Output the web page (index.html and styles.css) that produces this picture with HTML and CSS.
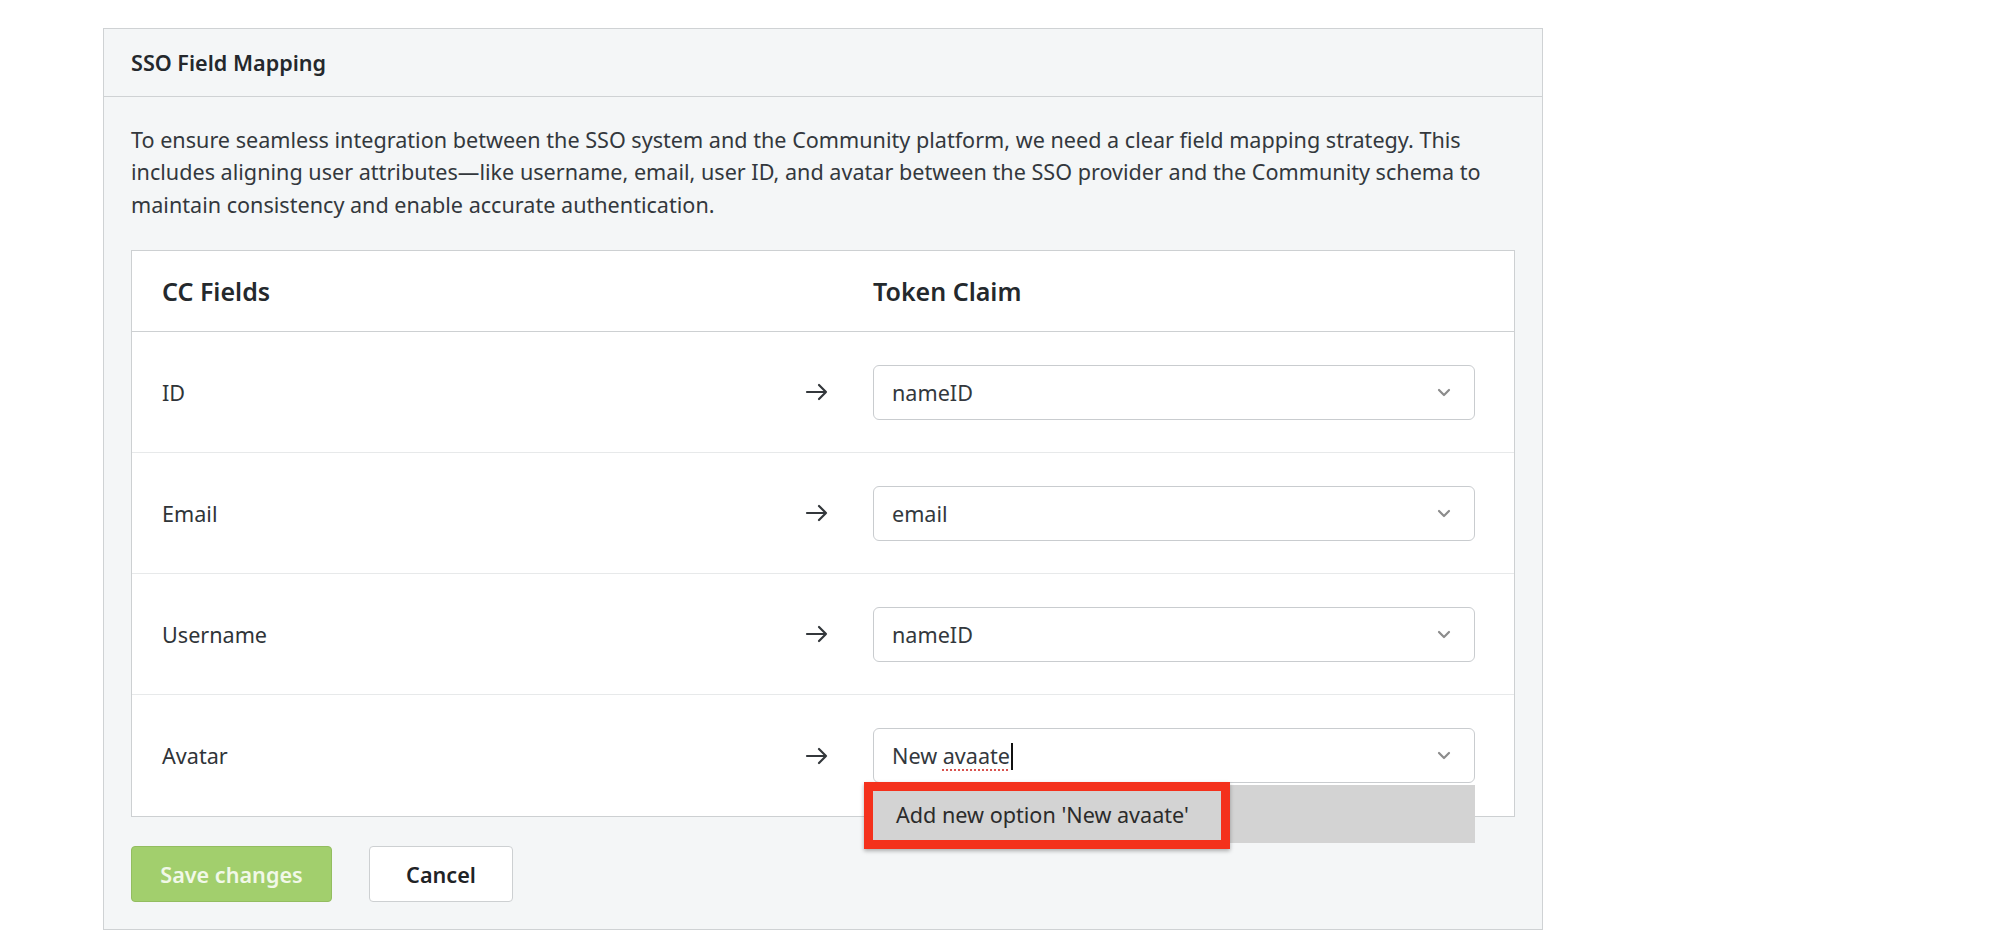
FILE: index.html
```html
<!DOCTYPE html>
<html lang="en">
<head>
    <meta charset="UTF-8">
    <meta name="viewport" content="width=device-width, initial-scale=1.0">
    <link rel="stylesheet" href="styles.css">
    <title>SSO Field Mapping</title>
</head>
<body>
    <div class="panel">
        <div class="panel-head">
            <h2 class="panel-title">SSO Field Mapping</h2>
        </div>

        <div class="panel-body">
            <p class="intro">To ensure seamless integration between the SSO system and the Community platform, we need a clear field mapping strategy. This includes aligning user attributes—like username, email, user ID, and avatar between the SSO provider and the Community schema to maintain consistency and enable accurate authentication.</p>

            <div class="map-table">
                <!-- Column headings -->
                <div class="map-row map-head">
                    <div class="col-title">CC Fields</div>
                    <div></div>
                    <div class="col-title">Token Claim</div>
                </div>

                <div class="map-row">
                    <div class="field-name">ID</div>
                    <svg class="arrow" width="24" height="18" viewBox="0 0 24 18"><path d="M2 9H21M14 2L21 9L14 16" fill="none" stroke="#33373b" stroke-width="2.2" stroke-linecap="round" stroke-linejoin="round"/></svg>
                    <div class="select">
                        <span class="select-value">nameID</span>
                        <svg class="chevron" width="14" height="9" viewBox="0 0 14 9"><path d="M2 2L7 7L12 2" fill="none" stroke="#8c8c8c" stroke-width="2.2" stroke-linecap="round" stroke-linejoin="round"/></svg>
                    </div>
                </div>

                <div class="map-row">
                    <div class="field-name">Email</div>
                    <svg class="arrow" width="24" height="18" viewBox="0 0 24 18"><path d="M2 9H21M14 2L21 9L14 16" fill="none" stroke="#33373b" stroke-width="2.2" stroke-linecap="round" stroke-linejoin="round"/></svg>
                    <div class="select">
                        <span class="select-value">email</span>
                        <svg class="chevron" width="14" height="9" viewBox="0 0 14 9"><path d="M2 2L7 7L12 2" fill="none" stroke="#8c8c8c" stroke-width="2.2" stroke-linecap="round" stroke-linejoin="round"/></svg>
                    </div>
                </div>

                <div class="map-row">
                    <div class="field-name">Username</div>
                    <svg class="arrow" width="24" height="18" viewBox="0 0 24 18"><path d="M2 9H21M14 2L21 9L14 16" fill="none" stroke="#33373b" stroke-width="2.2" stroke-linecap="round" stroke-linejoin="round"/></svg>
                    <div class="select">
                        <span class="select-value">nameID</span>
                        <svg class="chevron" width="14" height="9" viewBox="0 0 14 9"><path d="M2 2L7 7L12 2" fill="none" stroke="#8c8c8c" stroke-width="2.2" stroke-linecap="round" stroke-linejoin="round"/></svg>
                    </div>
                </div>

                <div class="map-row last-row">
                    <div class="field-name">Avatar</div>
                    <svg class="arrow" width="24" height="18" viewBox="0 0 24 18"><path d="M2 9H21M14 2L21 9L14 16" fill="none" stroke="#33373b" stroke-width="2.2" stroke-linecap="round" stroke-linejoin="round"/></svg>
                    <div class="select editing">
                        <span class="select-value">New <span class="misspelled">avaate</span><span class="caret"></span></span>
                        <svg class="chevron" width="14" height="9" viewBox="0 0 14 9"><path d="M2 2L7 7L12 2" fill="none" stroke="#8c8c8c" stroke-width="2.2" stroke-linecap="round" stroke-linejoin="round"/></svg>

                        <!-- Open dropdown -->
                        <div class="dropdown">
                            <div class="dropdown-item">Add new option 'New avaate'</div>
                            <div class="highlight-box"></div>
                        </div>
                    </div>
                </div>
            </div>

            <div class="actions">
                <button class="btn btn-save">Save changes</button>
                <button class="btn btn-cancel">Cancel</button>
            </div>
        </div>
    </div>
</body>
</html>
```

FILE: styles.css
```css
/* Page */
html, body {
    margin: 0;
    background-color: #fff;
    font-family: "Noto Sans", "Open Sans", sans-serif;
    color: #33383d;
}

/* Outer card */
.panel {
    box-sizing: border-box;
    width: 1440px;
    margin: 28px 0 0 103px;
    border: 1px solid #cfd2d4;
    background-color: #f4f6f7;
}

.panel-head {
    height: 67px;
    display: flex;
    align-items: center;
    padding-left: 27px;
    border-bottom: 1px solid #cfd2d4;
}

.panel-title {
    margin: 0;
    font-size: 21.6px;
    font-weight: 600;
    color: #24282c;
}

.panel-body {
    padding: 27px 27px 27px 27px;
}

.intro {
    margin: 0 0 29px 0;
    font-size: 21.6px;
    line-height: 32.4px;
    color: #33383d;
}

/* Mapping table */
.map-table {
    border: 1px solid #cdd0d2;
    background-color: #fff;
}

.map-row {
    display: grid;
    grid-template-columns: 1fr 24px 602px;
    column-gap: 44px;
    align-items: center;
    height: 120px;
    padding: 0 39px 0 30px;
    border-bottom: 1px solid #e7e9ea;
}

.map-head {
    height: 80px;
    border-bottom: 1px solid #cdd0d2;
}

.last-row {
    height: 121px;
    border-bottom: none;
}

.col-title {
    font-size: 25px;
    font-weight: 600;
    color: #24292d;
}

.field-name {
    font-size: 21.6px;
    color: #2f3438;
}

.arrow {
    display: block;
}

/* Fake select boxes */
.select {
    position: relative;
    box-sizing: border-box;
    height: 55px;
    display: flex;
    align-items: center;
    justify-content: space-between;
    padding: 0 23px 0 18px;
    border: 1px solid #c9cccf;
    border-radius: 6px;
    background-color: #fff;
}

.select-value {
    font-size: 21.6px;
    color: #33383d;
}

.chevron {
    display: block;
}

.misspelled {
    text-decoration: underline dotted #d9534f;
    text-decoration-thickness: 2px;
    text-underline-offset: 5px;
}

.caret {
    display: inline-block;
    width: 2px;
    height: 27px;
    margin-left: 1px;
    vertical-align: -6px;
    background-color: #111;
}

.dropdown {
    position: absolute;
    top: 100%;
    left: -1px;
    right: -1px;
    margin-top: 3px;
    height: 58px;
    background-color: #d3d3d3;
    z-index: 2;
}

.dropdown-item {
    height: 58px;
    display: flex;
    align-items: center;
    padding-left: 23px;
    font-size: 21.6px;
    color: #2b2b2b;
}

/* Red annotation around the option */
.highlight-box {
    position: absolute;
    left: -9px;
    top: -3px;
    width: 366px;
    height: 67px;
    box-sizing: border-box;
    border: 9px solid #f4311c;
    box-shadow: 0 2px 4px rgba(0, 0, 0, 0.3);
}

/* Buttons */
.actions {
    display: flex;
    gap: 37px;
    margin-top: 29px;
}

.btn {
    height: 56px;
    font-family: "Noto Sans", "Open Sans", sans-serif;
    font-size: 21.6px;
    font-weight: 600;
    border-radius: 4px;
    cursor: pointer;
}

.btn-save {
    width: 201px;
    background-color: #a2cf6d;
    border: 1px solid #93bd60;
    color: #f1f8e8;
}

.btn-cancel {
    width: 144px;
    background-color: #fff;
    border: 1px solid #cdd0d2;
    color: #1f2326;
}
```
